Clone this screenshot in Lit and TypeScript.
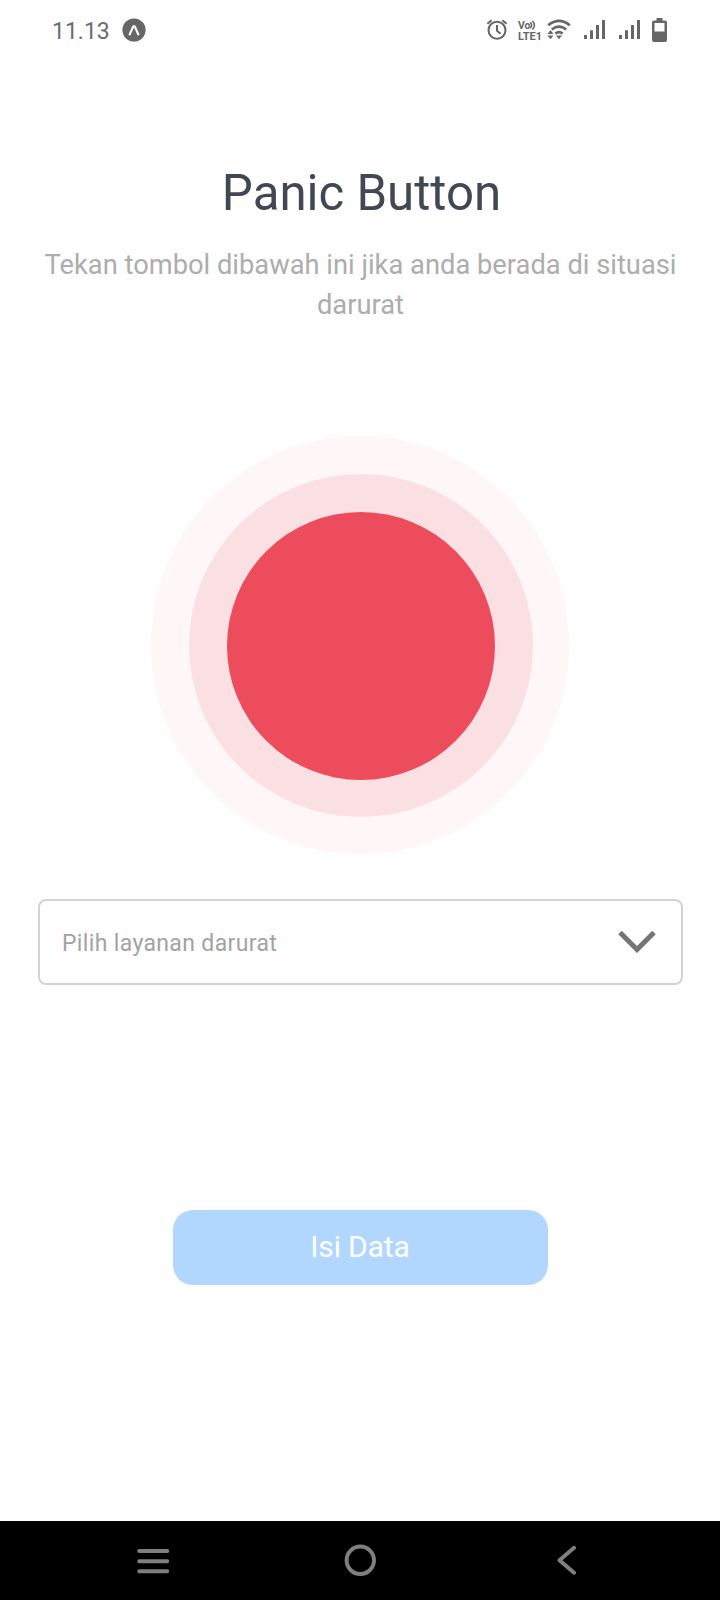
import { LitElement, html, css } from "lit";
import { customElement } from "lit/decorators.js";

const signal = () => html`<svg class="signal" width="21" height="19" viewBox="0 0 21 19">
  <path d="M0 15h3v4H0zM6 10.3h3V19H6zM12 5h3v14h-3zM18 0h3v19h-3z" />
</svg>`;

@customElement("status-bar")
export class StatusBar extends LitElement {
  static styles = css`
    :host { display: flex; align-items: center; height: 60px; box-sizing: border-box; padding: 0 53px 0 52px; color: #666; }
    svg { display: block; fill: #666; flex: none; }
    .time { font: 400 23px/28px Roboto, sans-serif; margin-top: 4px; color: #6c6c6c; }
    .badge { margin-left: 12px; }
    .icons { display: flex; align-items: center; margin-left: auto; }
    .volte { margin-left: 9px; }
    .wifi { margin-left: 5px; }
    .signal { margin-left: 13px; margin-top: -1px; }
    .signal + .signal { margin-left: 14px; }
    .battery { margin-left: 12px; }
    .line { fill: none; stroke: #666; }
    .small { font: 700 10.5px Roboto, sans-serif; }
  `;
  render() {
    return html`
      <span class="time">11.13</span>
      <svg class="badge" width="24" height="24" viewBox="0 0 24 24">
        <circle cx="12" cy="12" r="11.6" />
        <path d="M7.7 16.4 11.3 8.400h1.400l3.600 8" fill="none" stroke="#fff" stroke-width="2.2" stroke-linecap="round" stroke-linejoin="round" />
      </svg>
      <div class="icons">
        <svg width="22" height="24" viewBox="0 0 22 24">
          <g class="line" stroke-width="2">
            <circle cx="11" cy="12.200" r="8.500" />
            <path d="M11 7v5.700l3.600 3M1.400 5.800 5.700 2.200M20.600 5.800l-4.300-3.600" />
          </g>
        </svg>
        <svg class="volte" width="25" height="24" viewBox="0 0 25 24">
          <text class="small" x="1" y="11" textLength="12.500" lengthAdjust="spacingAndGlyphs">Vo</text>
          <path class="line" stroke-width="1.500" d="M13.300 4.300q2.700 3 0 6M15.400 2.800q4 4.500 0 8.800" />
          <text class="small" x="1" y="21.700" textLength="24" lengthAdjust="spacingAndGlyphs">LTE1</text>
        </svg>
        <svg class="wifi" width="24" height="24" viewBox="0 0 24 24">
          <g class="line" stroke-width="2.6">
            <path d="M1.200 7.200q10.800-8.600 21.600 0M4.800 11.500q7.200-5.600 14.400 0M8.400 15.600q3.600-2.800 7.200 0" />
          </g>
          <path d="m.5 16 3-4 3 4zM.5 17.500h6l-3 3.800zM9 17.500h6l-3 3.800z" />
        </svg>
        ${signal()}${signal()}
        <svg class="battery" width="15" height="24" viewBox="0 0 15 24">
          <path fill-rule="evenodd" d="M4.500 0h6v2.500H13q2 0 2 2V22q0 2-2 2H2q-2 0-2-2V4.500q0-2 2-2h2.500zM2.500 5v8.500h10V5z" />
        </svg>
      </div>
    `;
  }
}

@customElement("panic-button")
export class PanicButton extends LitElement {
  static styles = css`
    :host { display: block; }
    .outer, .mid, .core { border-radius: 50%; box-sizing: border-box; }
    .outer { width: 418px; height: 418px; padding: 38px; background: #fff6f7; }
    .mid { width: 344px; height: 343px; padding: 38px; background: #fbe0e3; }
    .core { width: 268px; height: 268px; background: #ed4c5c; }
  `;
  render() {
    return html`<div class="outer"><div class="mid"><div class="core"></div></div></div>`;
  }
}

@customElement("nav-bar")
export class NavBar extends LitElement {
  static styles = css`
    :host { display: grid; grid-template-columns: 207px 214px 20px; align-items: center; height: 79px; box-sizing: border-box; padding: 0 0 1px 136px; background: #000; }
    svg { display: block; fill: none; stroke: #7f7f7f; stroke-width: 4; stroke-linecap: round; stroke-linejoin: round; }
  `;
  render() {
    return html`
      <svg width="34" height="34" viewBox="0 0 34 34"><path d="M3.200 8h28M3.200 18.200h28M3.200 28.300h28" /></svg>
      <svg width="34" height="34" viewBox="0 0 34 34"><circle cx="17.300" cy="17.300" r="13.700" /></svg>
      <svg width="20" height="34" viewBox="0 0 20 34"><path d="M17 4.800 2.500 17.300 17 29.800" /></svg>
    `;
  }
}

@customElement("app-root")
export class AppRoot extends LitElement {
  static styles = css`
    :host { display: flex; flex-direction: column; height: 1600px; background: #fefefe; font-family: Roboto, sans-serif; }
    main { flex: 1; display: flex; flex-direction: column; align-items: center; }
    h1 { margin: 105px 0 0 3px; font-weight: 400; font-size: 49.2px; line-height: 56px; color: #414853; }
    p { margin: 24px 36px 0 37px; font-size: 27.3px; line-height: 40px; text-align: center; color: #adadad; }
    panic-button { margin-top: 111px; }
    .select { display: flex; align-items: center; justify-content: space-between; width: 645px; height: 86px; box-sizing: border-box; margin: 45px 0 0 1px; padding: 0 25.500px 0 22px; border: 2px solid #d3d3d3; border-radius: 8px; font-size: 23px; line-height: 28px; letter-spacing: 0.35px; color: #a3a3a3; }
    .select span { padding-top: 4px; }
    .chevron { fill: none; stroke: #757575; stroke-width: 5; }
    .submit { width: 375px; height: 75px; margin-top: 225px; padding: 0 0 2px; border: 0; border-radius: 20px; background: #b2d7ff; color: #fff; font: 400 30px/36px Roboto, sans-serif; letter-spacing: -0.15px; }
  `;
  render() {
    return html`
      <status-bar></status-bar>
      <main>
        <h1>Panic Button</h1>
        <p>Tekan tombol dibawah ini jika anda berada di situasi darurat</p>
        <panic-button></panic-button>
        <div class="select">
          <span>Pilih layanan darurat</span>
          <svg class="chevron" width="38" height="24" viewBox="0 0 38 24"><path d="M2 2.500 19 19.500 36 2.500" /></svg>
        </div>
        <button class="submit">Isi Data</button>
      </main>
      <nav-bar></nav-bar>
    `;
  }
}
